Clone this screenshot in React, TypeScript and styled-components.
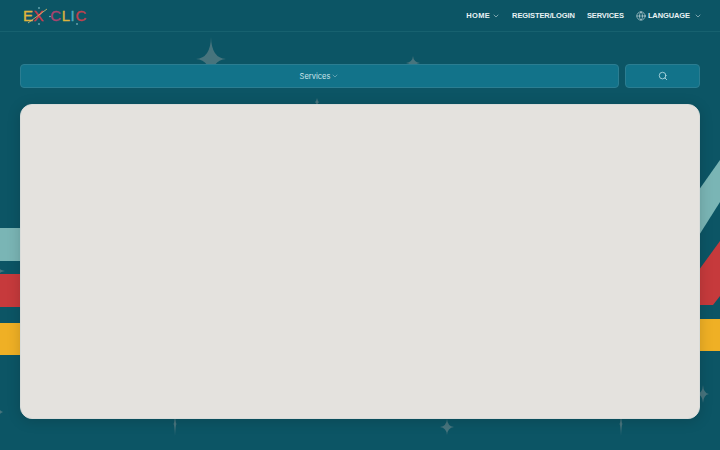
import React from "react";
import styled, { createGlobalStyle } from "styled-components";
import { ChevronDown, Globe, Search } from "lucide-react";

const Global = createGlobalStyle`
  html, body { margin: 0; padding: 0; height: 100%; }
  body { background: #0c5565; font-family: "Inter", "Liberation Sans", sans-serif; overflow: hidden; }
`;

const Page = styled.div`
  position: relative;
  width: 720px;
  height: 450px;
  overflow: hidden;
  background: #0c5565;
`;

const Backdrop = styled.svg`
  position: absolute;
  inset: 0;
  width: 720px;
  height: 450px;
`;

const Content = styled.div`
  position: relative;
  display: flex;
  flex-direction: column;
`;

const Header = styled.header`
  height: 32px;
  box-sizing: border-box;
  border-bottom: 1px solid #17616f;
  padding: 0 18px 0 23px;
  display: flex;
  align-items: center;
  justify-content: space-between;
`;

const Logo = styled.div`
  position: relative;
  display: flex;
  align-items: center;
  width: 65px;
  height: 16px;
  font-family: "Liberation Sans", sans-serif;
  font-size: 15px;
  -webkit-text-stroke: 0.35px currentColor;
  line-height: 16px;
  letter-spacing: 0.6px;
`;

const LogoLetter = styled.span<{ $color: string; $gap?: number }>`
  color: ${(p) => p.$color};
  margin-left: ${(p) => p.$gap ?? 0}px;
`;

const LogoSparks = styled.svg`
  position: absolute;
  left: 0;
  top: -8px;
  width: 65px;
  height: 32px;
`;

const Nav = styled.nav`
  display: flex;
  align-items: center;
  gap: 12px;
`;

const NavItem = styled.a`
  display: flex;
  align-items: center;
  gap: 2px;
  color: #e8f2f4;
  font-family: "Liberation Sans", sans-serif;
  font-weight: 700;
  font-size: 7.5px;
  letter-spacing: -0.1px;
  white-space: nowrap;
`;

const HomeLabel = styled.span`
  letter-spacing: 0.35px;
`;

const LangLabel = styled.span`
  margin-right: 2px;
`;

const SearchRow = styled.div`
  display: flex;
  gap: 6px;
  padding: 32px 20px 0;
`;

const Field = styled.button`
  height: 24px;
  box-sizing: border-box;
  border-radius: 4px;
  border: 1px solid #2b7d91;
  background: #12738a;
  color: #cfe7ec;
  padding: 0;
  display: flex;
  align-items: center;
  justify-content: center;
  gap: 1px;
`;

const ServicesField = styled(Field)`
  flex: 1;
  font-family: "Inter", sans-serif;
  font-size: 7.5px;
`;

const SearchButton = styled(Field)`
  width: 75px;
`;

const Panel = styled.main`
  margin: 16px 20px 0;
  height: 315px;
  box-sizing: border-box;
  border-radius: 12px;
  border: 1px solid #d9dcda;
  background: #e4e2de;
  box-shadow: 0 2px 14px rgba(0, 0, 0, 0.16);
`;

type StarProps = { x: number; y: number; w: number; h: number };

const Star = ({ x, y, w, h }: StarProps) => (
  <path
    d={`M${x} ${y - h}Q${x + 0.5} ${y - 0.8} ${x + w} ${y}Q${x + 0.5} ${y + 0.8} ${x} ${y + h}Q${x - 0.5} ${y + 0.8} ${x - w} ${y}Q${x - 0.5} ${y - 0.8} ${x} ${y - h}Z`}
    fill="#47747d"
  />
);

const stars: StarProps[] = [
  { x: 211, y: 59, w: 15, h: 22 },
  { x: 413, y: 63, w: 7, h: 7 },
  { x: 317, y: 102, w: 2, h: 4 },
  { x: 175, y: 424, w: 1.5, h: 12 },
  { x: 447, y: 427, w: 7, h: 8 },
  { x: 621, y: 424, w: 1.5, h: 12 },
  { x: 703, y: 394, w: 6, h: 9 },
  { x: 0, y: 271, w: 5, h: 2 },
  { x: 0, y: 412, w: 3, h: 2 },
];

const logo: { c: string; color: string; gap?: number }[] = [
  { c: "E", color: "#e3b53c" },
  { c: "X", color: "#d1394a" },
  { c: "C", color: "#a8446f", gap: 6 },
  { c: "L", color: "#dcb23e" },
  { c: "I", color: "#4fa9bd" },
  { c: "C", color: "#c0414e" },
];

export default function App() {
  return (
    <Page>
      <Global />
      <Backdrop viewBox="0 0 720 450">
        <rect width="720" height="450" fill="#0c5565" />
        {stars.map((s) => (
          <Star key={`${s.x}-${s.y}`} {...s} />
        ))}
        <rect x="0" y="228" width="24" height="33" fill="#7ab5b5" />
        <rect x="0" y="274" width="24" height="33" fill="#c63a3c" />
        <rect x="0" y="323" width="24" height="32" fill="#efb025" />
        <polygon points="696,194 720,160 720,202 696,240" fill="#7ab5b5" />
        <polygon points="696,274 720,241 720,296 713,305 696,305" fill="#c63a3c" />
        <rect x="696" y="319" width="24" height="32" fill="#efb025" />
      </Backdrop>
      <Content>
        <Header>
          <Logo>
            {logo.map((l, i) => (
              <LogoLetter key={i} $color={l.color} $gap={l.gap}>
                {l.c}
              </LogoLetter>
            ))}
            <LogoSparks viewBox="0 0 65 32">
              <line x1="5" y1="23" x2="24" y2="9" stroke="#dcc069" strokeWidth="0.8" />
              <g fill="#9fd6de">
                <circle cx="16" cy="8" r="0.8" />
                <circle cx="16" cy="24" r="0.8" />
                <circle cx="27" cy="16.5" r="0.7" />
                <circle cx="54" cy="24" r="0.8" />
              </g>
            </LogoSparks>
          </Logo>
          <Nav>
            <NavItem>
              <HomeLabel>HOME</HomeLabel>
              <ChevronDown size={8} strokeWidth={1.5} />
            </NavItem>
            <NavItem>REGISTER/LOGIN</NavItem>
            <NavItem>SERVICES</NavItem>
            <NavItem>
              <Globe size={10} strokeWidth={1.3} />
              <LangLabel>LANGUAGE</LangLabel>
              <ChevronDown size={8} strokeWidth={1.5} />
            </NavItem>
          </Nav>
        </Header>
        <SearchRow>
          <ServicesField>
            Services <ChevronDown size={8} strokeWidth={1.2} />
          </ServicesField>
          <SearchButton aria-label="Search">
            <Search size={10} strokeWidth={1.9} color="#bfe3ea" />
          </SearchButton>
        </SearchRow>
        <Panel />
      </Content>
    </Page>
  );
}
